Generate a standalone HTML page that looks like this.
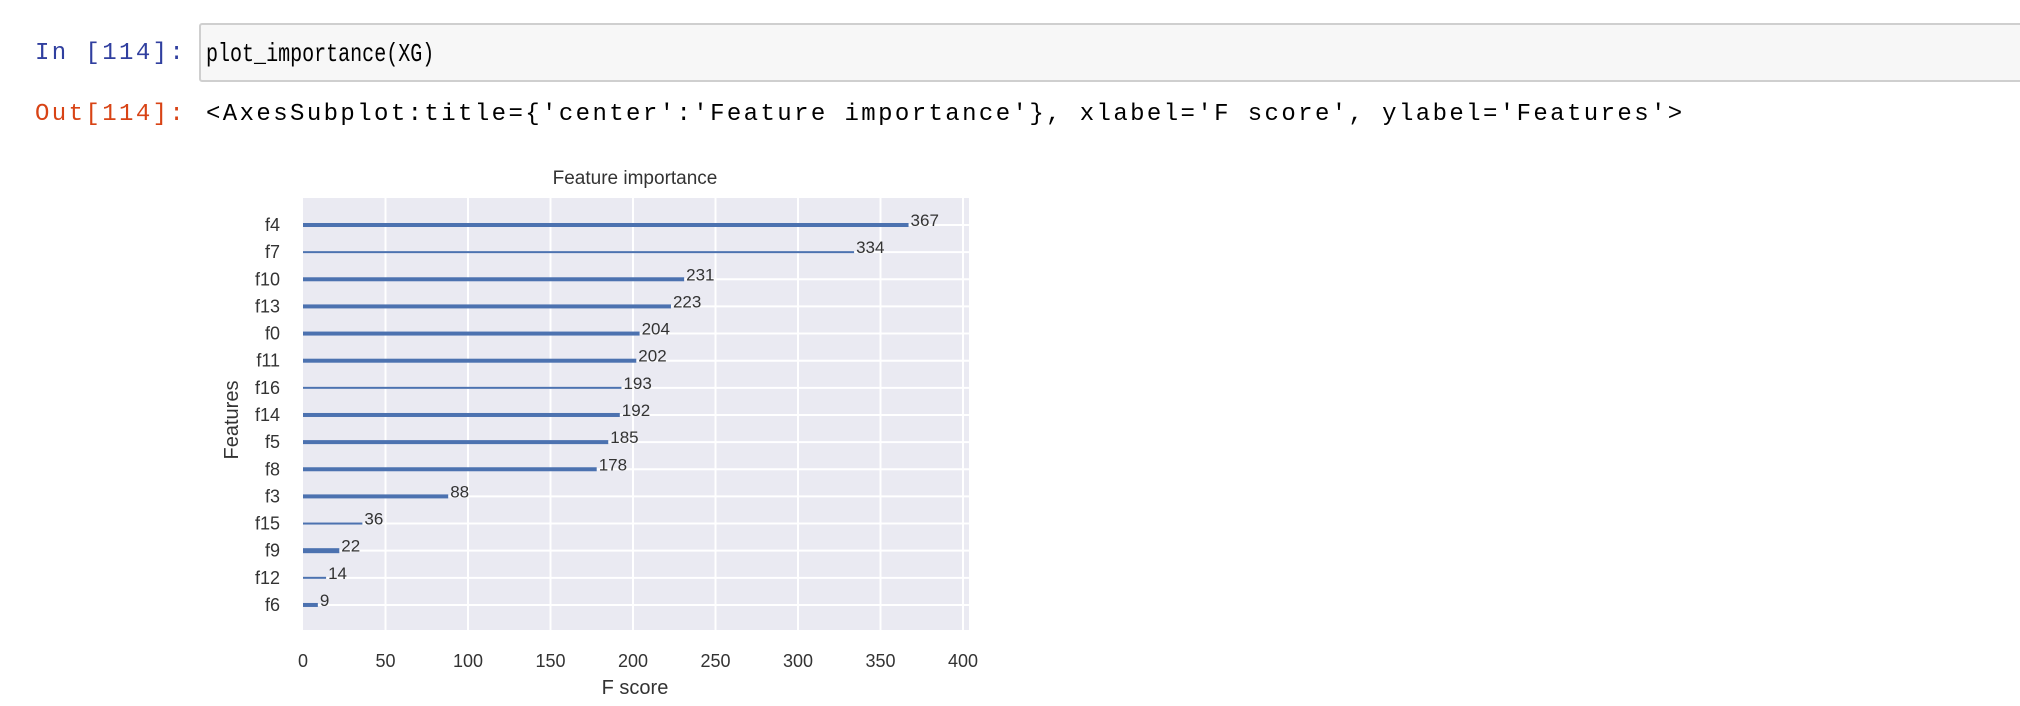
<!DOCTYPE html>
<html><head><meta charset="utf-8"><style>
html,body{margin:0;padding:0;background:#fff;width:2020px;height:706px;overflow:hidden;position:relative}
.p{position:absolute;font-family:"Liberation Mono",monospace;font-size:24px;letter-spacing:2.4px;white-space:pre;line-height:30px}
.box{position:absolute;left:199px;top:23px;width:1830px;height:55px;background:#f7f7f7;border:2px solid #cfcfcf;border-radius:3px}
</style></head><body>
<div class="box"></div>
<div class="p" style="left:35px;top:39px;color:#303f9f">In [114]:</div>
<div class="p" style="left:206px;top:39px;color:#000;font-size:26px;letter-spacing:0;transform:scaleX(0.77);transform-origin:0 0">plot_importance(XG)</div>
<div class="p" style="left:35px;top:100px;color:#d84315">Out[114]:</div>
<div class="p" style="left:206px;top:100px;color:#000">&lt;AxesSubplot:title={'center':'Feature importance'}, xlabel='F score', ylabel='Features'&gt;</div>
<svg style="position:absolute;left:0;top:0" width="2020" height="706" font-family="Liberation Sans, sans-serif">
<rect x="303" y="198" width="666" height="432" fill="#eaeaf2"/>
<g stroke="#fff" stroke-width="2">
<line x1="385.5" y1="198" x2="385.5" y2="630"/><line x1="468" y1="198" x2="468" y2="630"/><line x1="550.5" y1="198" x2="550.5" y2="630"/><line x1="633" y1="198" x2="633" y2="630"/><line x1="715.5" y1="198" x2="715.5" y2="630"/><line x1="798" y1="198" x2="798" y2="630"/><line x1="880.5" y1="198" x2="880.5" y2="630"/><line x1="963" y1="198" x2="963" y2="630"/>
</g>
<g id="bars"></g>
<text x="635" y="184" text-anchor="middle" font-size="19" fill="#333">Feature importance</text>
<g font-size="18" fill="#333" text-anchor="middle" id="xt"></g>
<text x="635" y="694" text-anchor="middle" font-size="20" fill="#333">F score</text>
<text transform="translate(238,420) rotate(-90)" text-anchor="middle" font-size="20" fill="#333">Features</text>
<g id="yt" font-size="18" fill="#333" text-anchor="end"></g>
</svg>
<script>
var d=[["f4",367,4],["f7",334,2],["f10",231,4],["f13",223,4],["f0",204,4],["f11",202,4],["f16",193,2],["f14",192,4],["f5",185,4],["f8",178,4],["f3",88,4],["f15",36,2],["f9",22,5],["f12",14,2],["f6",9,4]];
var ns="http://www.w3.org/2000/svg",b=document.getElementById("bars"),yt=document.getElementById("yt"),xt=document.getElementById("xt");
function el(t,a,p,tx){var e=document.createElementNS(ns,t);for(var k in a)e.setAttribute(k,a[k]);if(tx!=null)e.textContent=tx;p.appendChild(e);return e;}
d.forEach(function(r,i){var y=225+i*27.14,xe=303+r[1]*1.65;
el("line",{x1:303,x2:969,y1:y,y2:y,stroke:"#fff","stroke-width":2},b);
el("rect",{x:303,y:y-r[2]/2,width:xe-303,height:r[2],fill:"#4c72b0"},b);
el("text",{x:xe+2,y:y+1,"font-size":17,fill:"#333"},b,r[1]);
el("text",{x:280,y:y+6},yt,r[0]);});
for(var v=0;v<=400;v+=50)el("text",{x:303+v*1.65,y:667},xt,v);
</script>
</body></html>
